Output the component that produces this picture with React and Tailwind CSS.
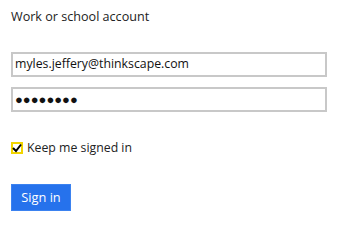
import { useState } from 'react';

// Sign-in form
const App = () => {
  const [keep, setKeep] = useState(true);

  return (
    <div className="w-[337px] h-[223px] bg-white pl-[11px] pt-[7px] text-[#222] font-['Open_Sans',sans-serif]">
      <h1 className="text-[12.6px] leading-[18px] pt-[1px]">Work or school account</h1>

      <div className="mt-[26px] flex flex-col gap-[10px]">
        <div className="w-[316px] h-[25px] border-2 border-[#c8c8c8] flex items-center px-[2px] text-[12.3px] text-[#111]">
          myles.jeffery@thinkscape.com
        </div>
        <div className="w-[316px] h-[25px] border-2 border-[#c8c8c8] flex items-center px-[2px] text-[13px] text-[#111]">
          ●●●●●●●●
        </div>
      </div>

      <label className="mt-[27px] h-[18px] flex items-center gap-[4px] text-[12.3px] text-[#222] cursor-pointer">
        <span
          onClick={() => setKeep(!keep)}
          className="w-[12px] h-[12px] border-2 border-[#f2d500] bg-white flex items-center justify-center"
        >
          {keep && (
            <svg width="10" height="10" viewBox="0 0 10 10" className="shrink-0">
              <path d="M1 5 L4 8 L9 1.5" fill="none" stroke="#000" strokeWidth="2" />
            </svg>
          )}
        </span>
        Keep me signed in
      </label>

      <button className="mt-[27px] w-[60px] h-[27px] bg-[#2672ec] border border-[#3b82f0] text-white text-[12.8px] flex items-center justify-center">
        Sign in
      </button>
    </div>
  );
};

export default App;
